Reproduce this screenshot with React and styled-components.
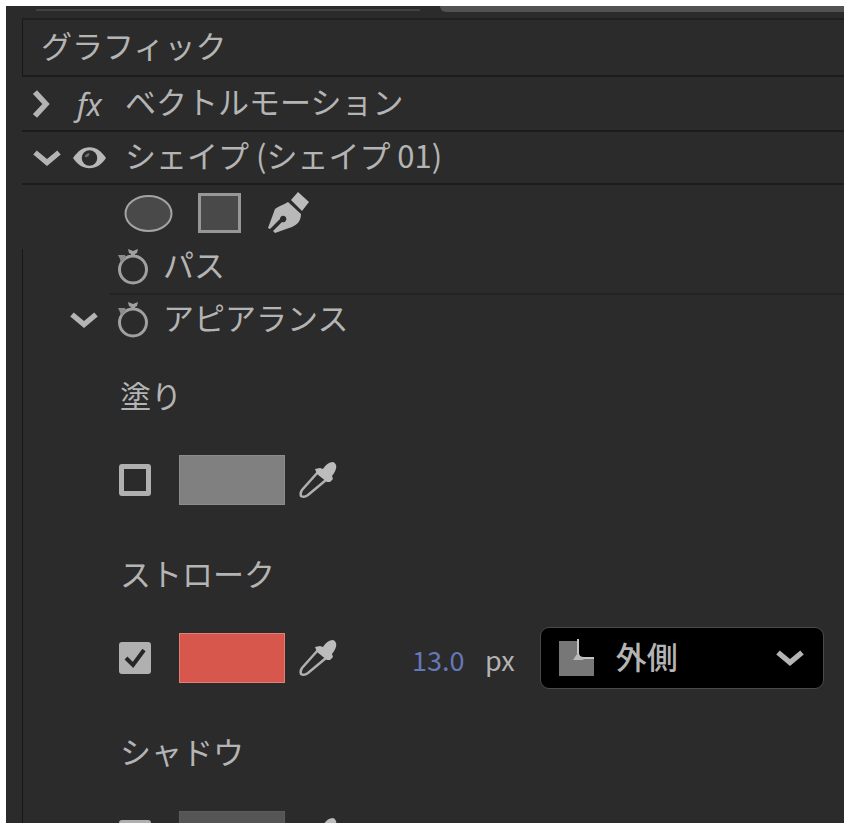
import { useState } from "react";
import styled, { createGlobalStyle } from "styled-components";

const GlobalStyle = createGlobalStyle`
  * {
    box-sizing: border-box;
  }

  body {
    margin: 0;
    background: #fff;
    color: #b4b4b4;
    font-family: "Noto Sans CJK JP", sans-serif;
    font-size: 31px;
    line-height: 36px;
  }

  button,
  input,
  select {
    margin: 0;
    padding: 0;
    border: none;
    background: none;
    color: inherit;
    font: inherit;
  }
`;

const Page = styled.main`
  height: 100vh;
  padding: 6px 6px 7px;
`;

const Panel = styled.section`
  height: 100%;
  overflow: hidden;
  padding-left: 16px;
  background: #2b2b2b;
`;

const TabStrip = styled.div`
  display: flex;
  gap: 20px;
  height: 14px;
  padding-left: 14px;
  border-bottom: 2px solid #202020;
`;

const TabEdge = styled.div`
  flex: ${(props) => props.$grow};
  height: ${(props) => (props.$active ? "6px" : "5px")};
  border-bottom: ${(props) => (props.$active ? "none" : "2px solid #424242")};
  border-radius: ${(props) => (props.$active ? "0 0 0 6px" : "0")};
  background: ${(props) => (props.$active ? "#525252" : "transparent")};
`;

const TitleRow = styled.div`
  display: flex;
  align-items: center;
  height: 57px;
  padding-left: 18px;
  border-left: 1px solid #181818;
  border-bottom: 2px solid #1c1c1c;
`;

const Title = styled.h1`
  margin: 0;
  padding-bottom: 6px;
  font-size: 31px;
  font-weight: 400;
`;

const EffectRow = styled.div`
  display: grid;
  grid-template-columns: 40px 33px 1fr;
  align-items: center;
  height: ${(props) => (props.$short ? "53px" : "55px")};
  padding-left: 11px;
  border-bottom: 2px solid #1c1c1c;
`;

const EffectName = styled.span`
  padding: 0 0 6px 19px;
  white-space: nowrap;
`;

const IconButton = styled.button`
  display: flex;
  align-items: center;
  cursor: pointer;

  svg {
    display: block;
  }
`;

const FxButton = styled.button`
  padding-left: 4px;
  font-family: "Noto Sans", sans-serif;
  font-style: italic;
  text-align: left;
  cursor: pointer;
`;

const ToolRow = styled.div`
  display: flex;
  align-items: center;
  gap: 25px;
  height: 64px;
  padding: 0 0 8px 102px;
`;

const Tree = styled.div`
  border-left: 1px solid #161616;
`;

const PathRow = styled.div`
  display: flex;
  align-items: center;
  height: 46px;
  margin-left: 86px;
  padding: 0 0 8px 8px;
  border-bottom: 2px solid #232323;
`;

const AppearanceRow = styled.div`
  display: grid;
  grid-template-columns: 47px 32px 1fr;
  align-items: center;
  height: 49px;
  padding-left: 47px;
`;

const PropertyName = styled.span`
  padding: 0 0 6px 14px;
  white-space: nowrap;
`;

const PaintGroup = styled.fieldset`
  min-width: 0;
  height: 178px;
  margin: 0;
  padding: 28px 20px 0 96px;
  border: none;
`;

const PaintLabel = styled.div`
  display: flex;
  align-items: center;
  height: 52px;
  padding: 0 0 6px 1px;
`;

const PaintRow = styled.div`
  display: flex;
  align-items: center;
  height: 50px;
  margin-top: 31px;
`;

const CheckLabel = styled.label`
  position: relative;
  flex: none;
  width: 32px;
  height: 32px;

  svg {
    position: absolute;
    inset: 0;
    pointer-events: none;
  }
`;

const CheckBox = styled.input`
  display: block;
  width: 32px;
  height: 32px;
  appearance: none;
  border: 5px solid #b0b0b0;
  border-radius: 3px;

  &:checked {
    background: #b0b0b0;
  }
`;

const Swatch = styled.button`
  flex: none;
  width: 106px;
  height: 50px;
  margin: 0 14px 0 28px;
  border: 1px solid ${(props) => props.$edge};
  background: ${(props) => props.$color};
  cursor: pointer;
`;

const WidthField = styled.label`
  display: flex;
  align-items: center;
  gap: 13px;
  margin-left: 75px;
  padding-top: 4px;
  font-size: 27px;
`;

const WidthInput = styled.input`
  width: 60px;
  color: #6478b8;
`;

const SelectBox = styled.div`
  position: relative;
  flex: 1;
  margin-left: 25px;

  svg {
    position: absolute;
    top: 0;
    bottom: 0;
    margin: auto 0;
    pointer-events: none;
  }

  svg:first-child {
    z-index: 1;
    left: 19px;
  }

  svg:last-child {
    right: 20px;
  }
`;

const PositionSelect = styled.select`
  display: block;
  width: 100%;
  height: 62px;
  padding: 0 0 4px 75px;
  appearance: none;
  border: 1px solid #4a4a4a;
  border-radius: 9px;
  background: #000;
  font-weight: 500;
`;

function ChevronDown() {
  return (
    <svg width="28" height="18" viewBox="0 0 28 18" fill="none">
      <path d="M2 3.5L14 13.5L26 3.5" stroke="#b4b4b4" strokeWidth="5.5" />
    </svg>
  );
}

function ChevronRight() {
  return (
    <svg width="18" height="28" viewBox="0 0 18 28" fill="none">
      <path d="M2 2L13 14L2 26" stroke="#b4b4b4" strokeWidth="5.5" />
    </svg>
  );
}

function EyeIcon() {
  return (
    <svg width="34" height="24" viewBox="0 0 34 24">
      <path d="M0 12C5 5 10 1 17 1S29 5 34 12C29 19 24 22.5 17 22.5S5 19 0 12Z" fill="#b8b8b8" />
      <circle cx="17" cy="12" r="8" fill="#2b2b2b" />
      <path d="M12 11Q13 7 17 7Q17 11 12 11Z" fill="#707070" />
    </svg>
  );
}

function EllipseIcon() {
  return (
    <svg width="49" height="39" viewBox="0 0 49 39">
      <ellipse cx="24.5" cy="19.5" rx="23" ry="17.5" fill="#494949" stroke="#a3a3a3" strokeWidth="2" />
    </svg>
  );
}

function RectangleIcon() {
  return (
    <svg width="43" height="40" viewBox="0 0 43 40">
      <rect x="1.5" y="1.5" width="40" height="37" fill="#494949" stroke="#979797" strokeWidth="3" />
    </svg>
  );
}

function PenIcon() {
  return (
    <svg width="44" height="42" viewBox="0 0 44 42">
      <path d="M32 0L43 10L36 19L25 8Z" fill="#bcbcbc" />
      <path d="M22 10L35 22C35 30 30 34 23 36L9 41L7 39L16 30A3.2 3.2 0 1 0 14 27L4 37L2 36L9 17C13 14 17 13 22 10Z" fill="#b8b8b8" />
    </svg>
  );
}

function StopwatchIcon() {
  return (
    <svg width="32" height="36" viewBox="0 0 32 36" fill="none">
      <circle cx="16" cy="20.5" r="13.5" stroke="#a0a0a0" strokeWidth="3" />
      <path d="M11 0L16 2L21 0L20 4L18 5V8H14V5L12 4Z" fill="#a0a0a0" />
      <path d="M1 6L8 6L9 9L4 14L3 10Z" fill="#8c8c8c" />
    </svg>
  );
}

function EyedropperIcon() {
  return (
    <svg width="38" height="38" viewBox="0 0 38 38" fill="none">
      <path d="M19 11L3 29Q1 32 2 35Q5 37 9 34L27 19" stroke="#b0b0b0" strokeWidth="2.5" />
      <path d="M16 8L21 7L24 8C26 5 29 1 34 1C39 3 38 9 33 15L34 18L31 21H28L18 13Z" fill="#bcbcbc" />
    </svg>
  );
}

function CheckMark() {
  return (
    <svg width="32" height="32" viewBox="0 0 32 32" fill="none">
      <path d="M7 16L14 23L25 8" stroke="#262626" strokeWidth="4" />
    </svg>
  );
}

function OutsideIcon() {
  return (
    <svg width="36" height="38" viewBox="0 0 36 38" fill="none">
      <path d="M0 2H18V20H35V37H0Z" fill="#777" />
      <path d="M19 0V14Q19 19 25 19H35" stroke="#c4c4c4" strokeWidth="2" />
      <path d="M14 21H25L18 15Z" fill="#b8b8b8" />
    </svg>
  );
}

function PaintSection({ name, color, edge, defaultChecked = false, children }) {
  const [checked, setChecked] = useState(defaultChecked);

  return (
    <PaintGroup aria-label={name}>
      <PaintLabel>{name}</PaintLabel>
      <PaintRow>
        <CheckLabel>
          <CheckBox
            type="checkbox"
            aria-label={name}
            checked={checked}
            onChange={(e) => setChecked(e.target.checked)}
          />
          {checked && <CheckMark />}
        </CheckLabel>
        <Swatch type="button" $color={color} $edge={edge} aria-label={name} />
        <IconButton type="button" aria-label={name}>
          <EyedropperIcon />
        </IconButton>
        {children}
      </PaintRow>
    </PaintGroup>
  );
}

function App() {
  const [strokeWidth, setStrokeWidth] = useState("13.0");

  return (
    <Page>
      <GlobalStyle />
      <Panel>
        <TabStrip>
          <TabEdge $grow={95} />
          <TabEdge $grow={100} $active />
        </TabStrip>

        <TitleRow>
          <Title>グラフィック</Title>
        </TitleRow>

        <EffectRow>
          <IconButton type="button" aria-label="ベクトルモーション">
            <ChevronRight />
          </IconButton>
          <FxButton type="button">fx</FxButton>
          <EffectName>ベクトルモーション</EffectName>
        </EffectRow>

        <EffectRow $short>
          <IconButton type="button" aria-label="シェイプ">
            <ChevronDown />
          </IconButton>
          <IconButton type="button" aria-label="シェイプ 01">
            <EyeIcon />
          </IconButton>
          <EffectName>シェイプ (シェイプ 01)</EffectName>
        </EffectRow>

        <ToolRow>
          <IconButton type="button" aria-label="楕円">
            <EllipseIcon />
          </IconButton>
          <IconButton type="button" aria-label="長方形">
            <RectangleIcon />
          </IconButton>
          <IconButton type="button" aria-label="ペン">
            <PenIcon />
          </IconButton>
        </ToolRow>

        <Tree>
          <PathRow>
            <IconButton type="button" aria-label="パス">
              <StopwatchIcon />
            </IconButton>
            <PropertyName>パス</PropertyName>
          </PathRow>

          <AppearanceRow>
            <IconButton type="button" aria-label="アピアランス">
              <ChevronDown />
            </IconButton>
            <IconButton type="button" aria-label="アピアランス">
              <StopwatchIcon />
            </IconButton>
            <PropertyName>アピアランス</PropertyName>
          </AppearanceRow>

          <PaintSection name="塗り" color="#808080" edge="#8c8c8c" />

          <PaintSection name="ストローク" color="#d8574c" edge="#e08078" defaultChecked>
            <WidthField>
              <WidthInput
                type="text"
                value={strokeWidth}
                onChange={(e) => setStrokeWidth(e.target.value)}
              />
              px
            </WidthField>
            <SelectBox>
              <OutsideIcon />
              <PositionSelect aria-label="ストローク" defaultValue="outside">
                <option value="outside">外側</option>
              </PositionSelect>
              <ChevronDown />
            </SelectBox>
          </PaintSection>

          <PaintSection name="シャドウ" color="#555" edge="#5c5c5c" />
        </Tree>
      </Panel>
    </Page>
  );
}

export default App;
